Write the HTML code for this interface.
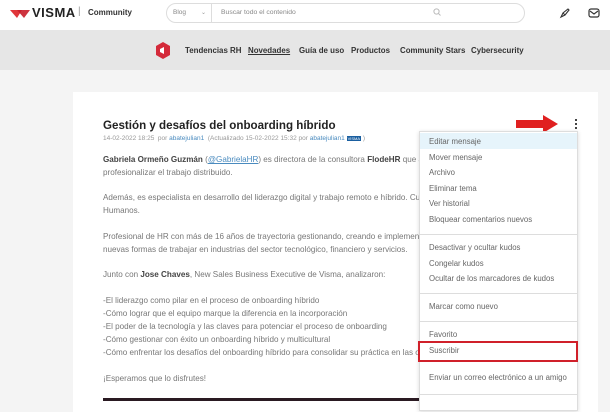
<!DOCTYPE html>
<html><head><meta charset="utf-8"><style>
*{margin:0;padding:0;box-sizing:border-box}
body{width:610px;height:401px;overflow:hidden;background:#f4f4f4;font-family:"Liberation Sans",sans-serif;position:relative;color:#666}
.a{position:absolute;white-space:nowrap}
.hdr{position:absolute;left:0;top:0;width:610px;height:30px;background:#fff}
.nav{position:absolute;left:0;top:30px;width:610px;height:40px;background:#e6e6e6}
.card{position:absolute;left:73px;top:92px;width:525px;height:320px;background:#fff}
.p{font-size:8.1px;color:#777}
.menu{position:absolute;left:419px;top:131px;width:159px;height:280px;background:#fff;border:1px solid #ddd;box-shadow:0 1px 4px rgba(0,0,0,.15)}
.mi{position:absolute;left:9px;font-size:7.8px;color:#666;white-space:nowrap}
.hr{position:absolute;left:0;width:157px;height:1px;background:#ddd}
.n{position:absolute;top:46px;font-size:7.9px;font-weight:bold;color:#333;white-space:nowrap}
</style></head><body>
<div class="hdr"></div>
<svg class="a" style="left:9px;top:7px" width="22" height="12" viewBox="0 0 22 12"><path d="M1 3 L8 11 L13 3 Z" fill="#e0363a"/><path d="M8 3 L15 11 L21 3 Z" fill="#c81e2a" opacity=".9"/></svg>
<div class="a" style="left:32px;top:5px;font-size:13px;font-weight:bold;color:#222;letter-spacing:.5px">VISMA</div>
<div class="a" style="left:78px;top:6px;font-size:10px;color:#999">|</div>
<div class="a" style="left:88px;top:8px;font-size:8px;font-weight:bold;color:#333">Community</div>
<div class="a" style="left:166px;top:3px;width:359px;height:20px;border:1px solid #ddd;border-radius:10px;background:#fff"></div>
<div class="a" style="left:211px;top:3px;width:1px;height:20px;background:#ddd"></div>
<div class="a" style="left:173px;top:9px;font-size:6.5px;color:#888">Blog</div>
<div class="a" style="left:201px;top:9px;font-size:6px;color:#999">⌄</div>
<div class="a" style="left:221px;top:9px;font-size:6.8px;color:#888">Buscar todo el contenido</div>
<svg class="a" style="left:433px;top:8px" width="8" height="8" viewBox="0 0 8 8"><circle cx="3.5" cy="3.5" r="2.6" fill="none" stroke="#bbb"/><path d="M5.5 5.5 L7.5 7.5" stroke="#bbb"/></svg>
<svg class="a" style="left:559px;top:7px" width="12" height="12" viewBox="0 0 12 12"><path d="M2 10 L4 6 L9 2 L10 3 L6 8 Z M4 6 L6 8" fill="none" stroke="#333" stroke-width="1.1"/></svg>
<svg class="a" style="left:588px;top:7px" width="12" height="12" viewBox="0 0 12 12"><rect x="1" y="2" width="10" height="8" rx="2" fill="none" stroke="#333" stroke-width="1.2"/><path d="M2 4 L6 7 L10 4" fill="none" stroke="#333" stroke-width="1.1"/></svg>
<div class="nav"></div>
<svg class="a" style="left:155px;top:42px" width="16" height="17" viewBox="0 0 16 17"><path d="M8 0 L15 4 L15 13 L8 17 L1 13 L1 4 Z" fill="#d42a3a"/><path d="M5 7 L9 5 L9 12 L5 10 Z" fill="#fff"/></svg>
<div class="n" style="left:185px">Tendencias RH</div>
<div class="n" style="left:248px;text-decoration:underline">Novedades</div>
<div class="n" style="left:299px">Guía de uso</div>
<div class="n" style="left:351px">Productos</div>
<div class="n" style="left:400px">Community Stars</div>
<div class="n" style="left:471px">Cybersecurity</div>
<div class="card"></div>
<div class="a" style="left:103px;top:119px;font-size:11.6px;font-weight:bold;color:#222">Gestión y desafíos del onboarding híbrido</div>
<div class="a" style="left:103px;top:135px;font-size:6.5px;color:#999">14-02-2022 18:25 &nbsp;por <span style="color:#4a8bbf">abatejulian1</span> &nbsp;(Actualizado 15-02-2022 15:32 por <span style="color:#4a8bbf">abatejulian1</span> <span style="background:#1a5fa0;color:#fff;font-size:4px;padding:0 1px">VISMA</span> )</div>
<div class="a p" style="left:103px;top:155px"><b style="color:#444">Gabriela Ormeño Guzmán</b> (<span style="color:#4a8bbf;text-decoration:underline">@GabrielaHR</span>) es directora de la consultora <b style="color:#444">FlodeHR</b> que apo</div>
<div class="a p" style="left:103px;top:168px">profesionalizar el trabajo distribuido.</div>
<div class="a p" style="left:103px;top:193px">Además, es especialista en desarrollo del liderazgo digital y trabajo remoto e híbrido. Cuen</div>
<div class="a p" style="left:103px;top:206px">Humanos.</div>
<div class="a p" style="left:103px;top:232px">Profesional de HR con más de 16 años de trayectoria gestionando, creando e implementar</div>
<div class="a p" style="left:103px;top:245px">nuevas formas de trabajar en industrias del sector tecnológico, financiero y servicios.</div>
<div class="a p" style="left:103px;top:270px">Junto con <b style="color:#444">Jose Chaves</b>, New Sales Business Executive de Visma, analizaron:</div>
<div class="a p" style="left:103px;top:296px">-El liderazgo como pilar en el proceso de onboarding híbrido</div>
<div class="a p" style="left:103px;top:309px">-Cómo lograr que el equipo marque la diferencia en la incorporación</div>
<div class="a p" style="left:103px;top:322px">-El poder de la tecnología y las claves para potenciar el proceso de onboarding</div>
<div class="a p" style="left:103px;top:335px">-Cómo gestionar con éxito un onboarding híbrido y multicultural</div>
<div class="a p" style="left:103px;top:348px">-Cómo enfrentar los desafíos del onboarding híbrido para consolidar su práctica en las org</div>
<div class="a p" style="left:103px;top:374px">¡Esperamos que lo disfrutes!</div>
<div class="a" style="left:103px;top:398px;width:320px;height:3px;background:#2a1a22"></div>
<svg class="a" style="left:515px;top:114px" width="45" height="20" viewBox="0 0 45 20"><path d="M1 6 L28 6 L28 1 L43 10 L28 19 L28 14 L1 14 Z" fill="#e02020"/></svg>
<div class="a" style="left:575px;top:119px;width:2px;height:2px;background:#444"></div>
<div class="a" style="left:575px;top:123px;width:2px;height:2px;background:#444"></div>
<div class="a" style="left:575px;top:127px;width:2px;height:2px;background:#444"></div>
<div class="menu">
<div class="a" style="left:0;top:1px;width:157px;height:16px;background:#e6f4fb"></div>
<div class="mi" style="top:5px">Editar mensaje</div>
<div class="mi" style="top:21px">Mover mensaje</div>
<div class="mi" style="top:36px">Archivo</div>
<div class="mi" style="top:52px">Eliminar tema</div>
<div class="mi" style="top:67px">Ver historial</div>
<div class="mi" style="top:83px">Bloquear comentarios nuevos</div>
<div class="hr" style="top:102px"></div>
<div class="mi" style="top:111px">Desactivar y ocultar kudos</div>
<div class="mi" style="top:127px">Congelar kudos</div>
<div class="mi" style="top:142px">Ocultar de los marcadores de kudos</div>
<div class="hr" style="top:161px"></div>
<div class="mi" style="top:170px">Marcar como nuevo</div>
<div class="hr" style="top:189px"></div>
<div class="mi" style="top:198px">Favorito</div>
<div class="mi" style="top:214px">Suscribir</div>
<div class="mi" style="top:241px">Enviar un correo electrónico a un amigo</div>
<div class="hr" style="top:262px"></div>
</div>
<div class="a" style="left:418px;top:341px;width:160px;height:21px;border:2px solid #d0202a"></div>
</body></html>
